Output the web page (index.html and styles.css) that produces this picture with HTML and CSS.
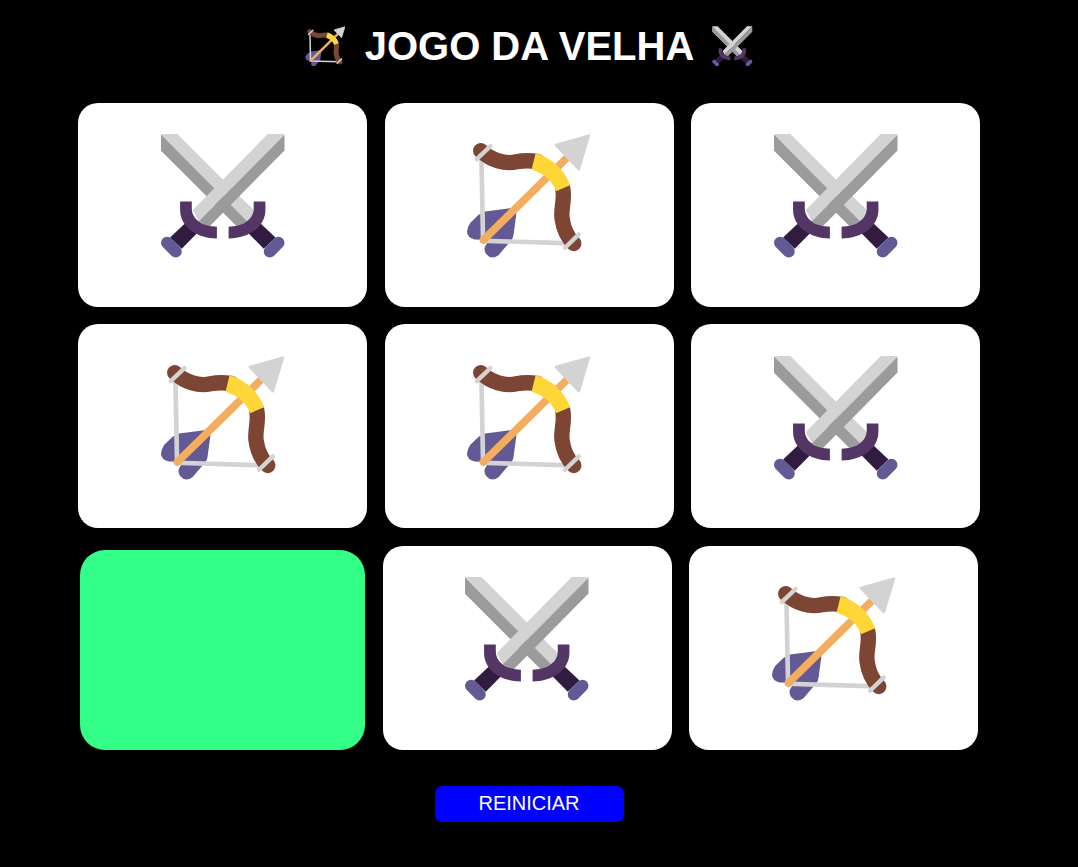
FILE: index.html
```html
<!DOCTYPE html>
<html lang="pt-BR">
<head>
<meta charset="utf-8">
<title>Jogo da Velha</title>
<link rel="stylesheet" href="styles.css">
</head>
<body>
<svg class="sprite" xmlns="http://www.w3.org/2000/svg" aria-hidden="true">
  <symbol id="swords" viewBox="60 40 375 375">
    <path fill="#9B9B9B" d="M63 45V92L292 321L335 265L63 45Z"/>
    <path fill="#D3D3D3" d="M63 45Q63 43 70 43H112L342 273L320 312L63 45Z"/>
    <path fill="#9B9B9B" d="M63 45L320 304L292 321L63 92Z"/>
    <path fill="#D3D3D3" d="M432 45Q432 43 425 43H382L158 270L176 304Z"/>
    <path fill="#9B9B9B" d="M432 45V92L205 322L176 304Z"/>
    <path fill="#321B41" d="M90 352L140 305L175 335L125 386Z"/>
    <path fill="#321B41" d="M405 352L355 305L320 335L370 386Z"/>
    <path fill="#533566" d="M120 245H155V265C155 300 190 320 230 320V355C170 355 120 320 120 270Z"/>
    <path fill="#533566" d="M375 245H340V265C340 300 305 320 265 320V355C325 355 375 320 375 270Z"/>
    <path stroke="#635994" stroke-width="36" stroke-linecap="round" d="M81 368L107 394"/>
    <path stroke="#635994" stroke-width="36" stroke-linecap="round" d="M414 368L388 394"/>
  </symbol>
  <symbol id="bow" viewBox="49 40 375 375">
    <path fill="#635994" d="M86 285L101 275L181 265Q202 263 199 285L191 345Q190 355 183 362L146 405Q125 420 110 402Q98 388 111 370L118 360L75 358Q52 352 52 335Q52 322 62 308Z"/>
    <path fill="none" stroke="#D3D3D3" stroke-width="14" d="M95 110L100 362L365 370"/>
    <path fill="none" stroke="#F3AD61" stroke-width="23" stroke-linecap="round" d="M101 360L350 115"/>
    <path fill="#D3D3D3" stroke="#D3D3D3" stroke-width="8" stroke-linejoin="round" d="M318 76L416 48L386 148Z"/>
    <path fill="none" stroke="#7D4533" stroke-width="46" stroke-linecap="round" d="M93 93C125 122 165 134 200 126C225 121 240 122 262 125"/>
    <path fill="none" stroke="#7D4533" stroke-width="46" stroke-linecap="round" d="M338 205C345 240 332 265 336 295C340 325 350 350 371 370"/>
    <path fill="#FFD638" d="M257 100C300 112 345 150 360 196L318 214C305 180 280 160 245 150Z"/>
    <path fill="none" stroke="#D3D3D3" stroke-width="13" stroke-linecap="round" d="M81 118L122 79"/>
    <path fill="none" stroke="#D3D3D3" stroke-width="13" stroke-linecap="round" d="M345 383L386 343"/>
  </symbol>
</svg>
<main class="page">
  <h1 class="title">
    <svg class="title-icon" aria-hidden="true"><use href="#bow"/></svg>
    <span class="title-text">JOGO DA VELHA</span>
    <svg class="title-icon" aria-hidden="true"><use href="#swords"/></svg>
  </h1>
  <div class="board">
    <button class="cell"><svg class="mark"><use href="#swords"/></svg></button>
    <button class="cell"><svg class="mark"><use href="#bow"/></svg></button>
    <button class="cell"><svg class="mark"><use href="#swords"/></svg></button>
    <button class="cell"><svg class="mark"><use href="#bow"/></svg></button>
    <button class="cell"><svg class="mark"><use href="#bow"/></svg></button>
    <button class="cell"><svg class="mark"><use href="#swords"/></svg></button>
    <button class="cell cell-empty"></button>
    <button class="cell"><svg class="mark"><use href="#swords"/></svg></button>
    <button class="cell"><svg class="mark"><use href="#bow"/></svg></button>
  </div>
  <button class="restart">REINICIAR</button>
</main>
</body>
</html>
```
FILE: styles.css
```css
* {
  box-sizing: border-box;
}

html,
body {
  margin: 0;
  background: #000;
}

.sprite {
  display: block;
  width: 0;
  height: 0;
}

.page {
  width: 1058px;
  height: 867px;
  padding-top: 23px;
  display: flex;
  flex-direction: column;
  align-items: center;
  font-family: "Liberation Sans", Arial, sans-serif;
  overflow: hidden;
}

.title {
  margin: 0 0 33.9px;
  height: 46px;
  display: flex;
  align-items: center;
  gap: 18.5px;
  font-size: 40px;
  line-height: 46px;
  font-weight: 700;
  color: #fff;
}

.title-text {
  margin-right: -1px;
}

.title-icon {
  width: 40.7px;
  height: 40.7px;
}

.board {
  width: 905px;
  display: flex;
  flex-wrap: wrap;
  justify-content: center;
  align-items: flex-end;
  gap: 17.5px;
}

.cell {
  width: 289px;
  height: 204px;
  padding: 30.3px 0 0;
  display: flex;
  justify-content: center;
  align-items: flex-start;
  border: 0;
  border-radius: 20px;
  background: #fff;
}

.cell-empty {
  width: 285px;
  height: 200px;
  border-radius: 25px;
  background: #3f8;
}

.mark {
  width: 125.5px;
  height: 125.5px;
}

.restart {
  margin-top: 36px;
  width: 189px;
  height: 36px;
  padding: 0;
  border: 0;
  border-radius: 7px;
  background: #00f;
  color: #fff;
  font-family: inherit;
  font-size: 20px;
}
```
